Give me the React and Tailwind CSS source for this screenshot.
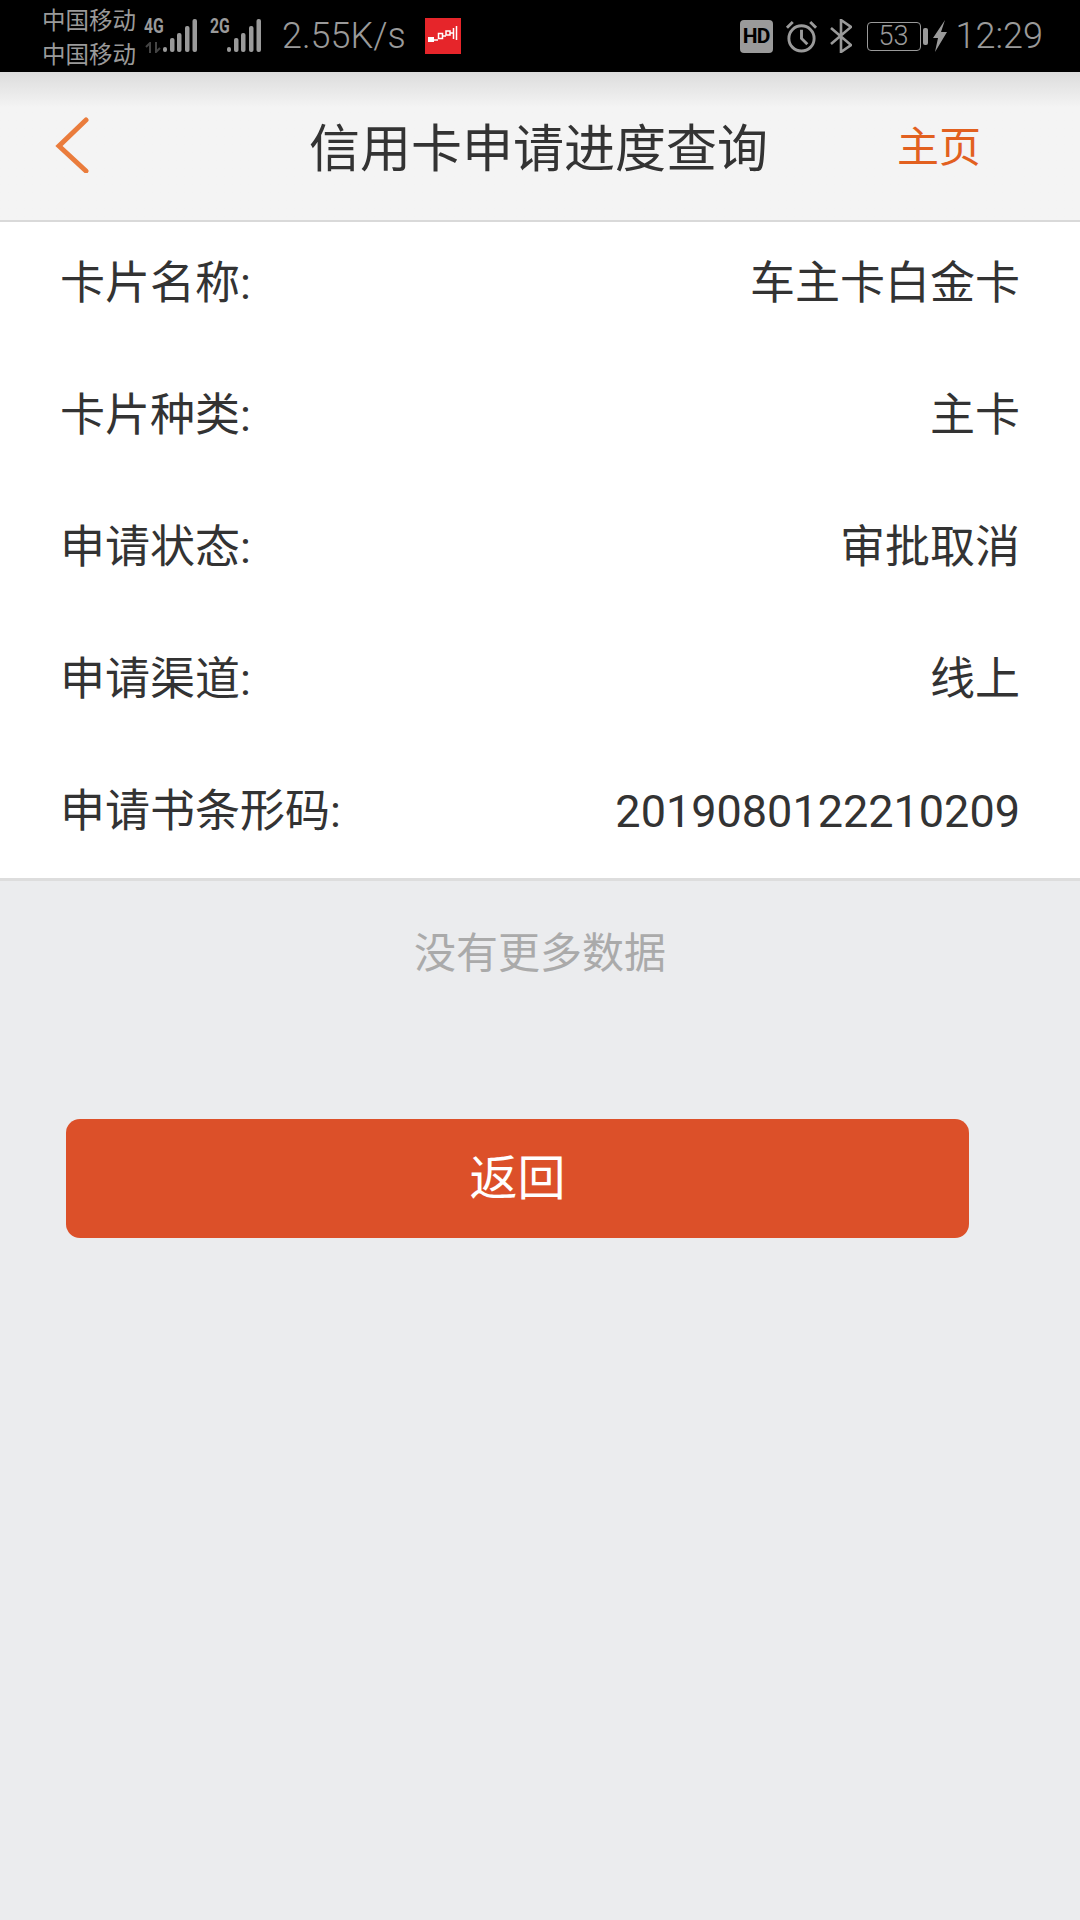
const FONT = 'font-["Roboto","Noto_Sans_CJK_SC",sans-serif]';

const rows = [
  { label: '卡片名称:', value: '车主卡白金卡' },
  { label: '卡片种类:', value: '主卡' },
  { label: '申请状态:', value: '审批取消' },
  { label: '申请渠道:', value: '线上' },
  { label: '申请书条形码:', value: '2019080122210209' },
];

function Signal({ className }) {
  return (
    <svg viewBox="0 0 34 34" className={className} fill="#9a9a9a">
      <rect x="0" y="28" width="4" height="5" rx="2" />
      <rect x="7" y="19" width="4.5" height="14" rx="2" />
      <rect x="14" y="14" width="4.5" height="19" rx="2" />
      <rect x="22" y="7" width="4.5" height="26" rx="2" />
      <rect x="29.5" y="0" width="4.5" height="33" rx="2" />
    </svg>
  );
}

function StatusBar() {
  return (
    <div className={`h-[72px] bg-black flex items-center justify-between pl-[42px] pr-[37px] text-[#9a9a9a] ${FONT}`}>
      <div className="flex items-center">
        <div className="flex flex-col text-[23.5px] leading-[34px] w-[101px] pt-[3px]">
          <span>中国移动</span>
          <span>中国移动</span>
        </div>
        <div className="relative w-[65px] h-[40px]">
          <span className="absolute left-[1px] top-0 text-[21px] font-bold leading-[20px] scale-x-75 origin-left">4G</span>
          <svg viewBox="0 0 16 11" className="absolute left-[2px] top-[26px] w-[16px] h-[11px]" fill="none" stroke="#444" strokeWidth="2">
            <path d="M5 11V1L1 5M11 0v10l4-4" />
          </svg>
          <Signal className="absolute left-[20px] top-[3px] w-[34px] h-[34px]" />
        </div>
        <div className="relative w-[58px] h-[40px]">
          <span className="absolute left-[2px] top-0 text-[21px] font-bold leading-[20px] scale-x-75 origin-left">2G</span>
          <Signal className="absolute left-[19px] top-[3px] w-[34px] h-[34px]" />
        </div>
        <span className="text-[36px] leading-none ml-[16px] font-light">2.55K/s</span>
        <svg viewBox="0 0 36 36" className="w-[36px] h-[36px] ml-[19px]">
          <rect width="36" height="36" fill="#e6252a" />
          <path d="M3 19h6v5H3z" fill="#fff" />
          <path d="M13.5 15.5h4v5h-4zM21 13h4v4h-4zM31.5 8v14" fill="none" stroke="#fff" strokeWidth="1.5" />
          <path d="M9 22h4M18 18h3M25 15h3M28.5 10v11" stroke="#fff" strokeWidth="1.5" fill="none" />
        </svg>
      </div>

      <div className="flex items-center">
        <div className="w-[33px] h-[33px] rounded-[4px] bg-[#9a9a9a] text-black text-[21px] font-bold leading-[33px] text-center tracking-[-1px]">HD</div>
        <svg viewBox="0 0 34 34" className="w-[33px] h-[33px] ml-[12px]" fill="none" stroke="#9a9a9a" strokeWidth="3">
          <circle cx="17" cy="19" r="13" />
          <path d="M17 10v9l6 6M2 8l6-6M32 8l-6-6" />
        </svg>
        <svg viewBox="0 0 22 34" className="w-[22px] h-[34px] ml-[12px]" fill="none" stroke="#9a9a9a" strokeWidth="2.6">
          <path d="M1 9l20 17-10 7V1l10 7L1 25" />
        </svg>
        <div className="w-[54px] h-[29px] ml-[15px] rounded-[4px] border-[1.5px] border-[#9a9a9a] text-[27px] leading-[26px] text-center font-light">53</div>
        <div className="w-[5px] h-[17px] ml-[2px] rounded-[2px] bg-[#9a9a9a]" />
        <svg viewBox="0 0 14 32" className="w-[14px] h-[32px] ml-[5px]" fill="#9a9a9a">
          <path d="M12 0L0 18h5L2 32 14 12H8z" />
        </svg>
        <span className="text-[36px] leading-none ml-[9px] font-light">12:29</span>
      </div>
    </div>
  );
}

export default function App() {
  return (
    <div className={`w-[1080px] h-[1920px] bg-[#ebecee] overflow-hidden ${FONT}`}>
      <StatusBar />

      <div className="relative h-[150px] bg-[#f4f4f4] border-b-2 border-[#d9d9d9] bg-gradient-to-b from-[#dcdcdc] via-[#f4f4f4] via-[24%] to-[#f4f4f4] flex items-center justify-center">
        <svg viewBox="0 0 34 56" className="absolute left-[55px] top-[45px] w-[34px] h-[56px]" fill="none" stroke="#ea7c3c" strokeWidth="5" strokeLinecap="round">
          <path d="M31 3L4 29l27 25" />
        </svg>
        <span className="text-[51px] leading-none text-[#333] pt-[7px] pr-[3px]">信用卡申请进度查询</span>
        <span className="absolute left-[897px] top-[55px] text-[42px] leading-none text-[#e2601f]">主页</span>
      </div>

      <div className="bg-white border-b-[3px] border-[#dddddd] pl-[60px] pr-[60px]">
        {rows.map((row, i) => (
          <div key={i} className="h-[132px] pb-[8px] flex items-center justify-between text-[45px] text-[#333] last:h-[128px] last:pb-[4px]">
            <span>{row.label}</span>
            <span>{row.value}</span>
          </div>
        ))}
      </div>

      <div className="mt-[46px] text-center text-[42px] leading-[54px] text-[#aaaaaa]">没有更多数据</div>

      <div className="mt-[138px] ml-[66px] w-[903px] h-[119px] rounded-[14px] bg-[#dc5029] flex items-center justify-center text-[48px] text-white">
        返回
      </div>
    </div>
  );
}
